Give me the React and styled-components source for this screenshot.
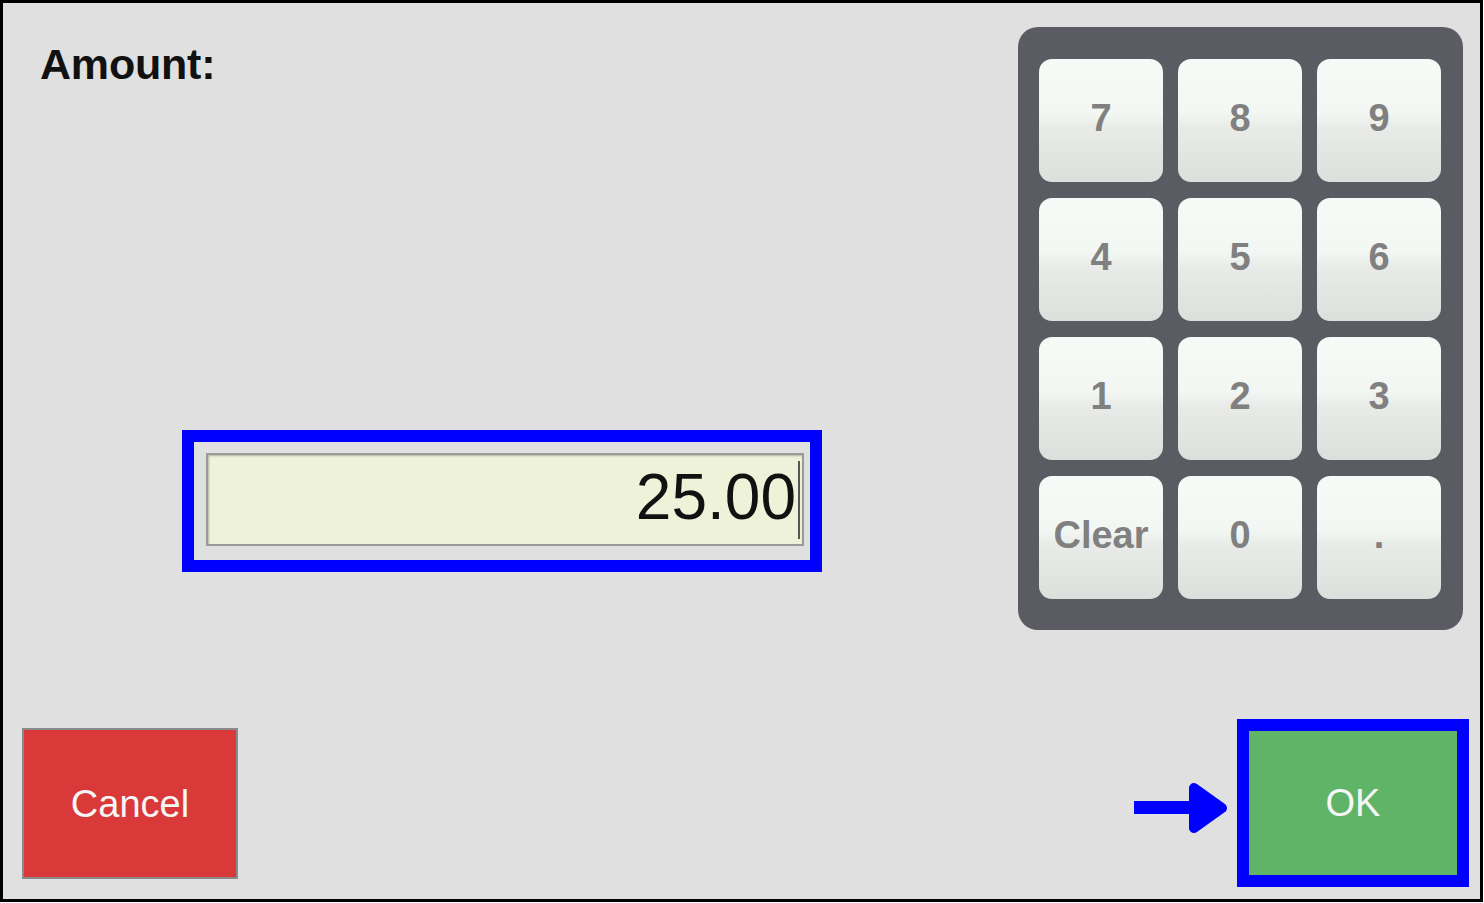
import React from 'react';
import styled, { createGlobalStyle } from 'styled-components';

const GlobalStyle = createGlobalStyle`
  html, body {
    margin: 0;
    padding: 0;
    background: #ffffff;
  }
  * {
    box-sizing: border-box;
  }
`;

const Frame = styled.div`
  width: 1483px;
  height: 902px;
  border: 3px solid #000;
  background: #e0e0e0;
  display: flex;
  flex-direction: column;
  justify-content: space-between;
  font-family: "Liberation Sans", Arial, sans-serif;
`;

const TopRow = styled.div`
  display: flex;
  justify-content: space-between;
  align-items: flex-start;
  padding: 24px 17px 0 0;
`;

const LeftColumn = styled.div`
  display: flex;
  flex-direction: column;
  align-items: flex-start;
  padding-left: 37px;
`;

const Label = styled.div`
  margin-top: 16px;
  font-size: 43px;
  line-height: 1;
  font-weight: bold;
  letter-spacing: -0.2px;
  color: #111;
`;

// blue outline drawn round the highlighted control
const Highlight = styled.div`
  border: 12px solid #0000ff;
  padding: ${p => p.$pad || '0'};
  margin: ${p => p.$margin || '0'};
`;

const AmountField = styled.div`
  width: 598px;
  height: 93px;
  display: flex;
  align-items: center;
  justify-content: flex-end;
  padding: 0 2px 6px 0;
  background: #eef2d9;
  border: 2px solid #9a9a9a;
  box-shadow: inset 1px 1px 2px rgba(0, 0, 0, 0.25);
  font-size: 64px;
  line-height: 1;
  color: #111;
`;

const Caret = styled.span`
  display: inline-block;
  width: 2px;
  height: 78px;
  margin: 6px 0 0 2px;
  background: #555;
`;

const Keypad = styled.div`
  width: 445px;
  height: 603px;
  padding: 32px 22px 31px 21px;
  background: #5b5b63;
  border-radius: 20px;
  display: grid;
  grid-template-columns: repeat(3, 124px);
  grid-template-rows: repeat(4, 123px);
  column-gap: 15px;
  row-gap: 16px;
`;

const Key = styled.button`
  display: flex;
  align-items: center;
  justify-content: center;
  padding: 0 0 5px 0;
  border: none;
  border-radius: 13px;
  background: linear-gradient(
    to bottom,
    #f7faf7 0%,
    #f3f7f3 44%,
    #e8ebe8 56%,
    #dcdfdc 100%
  );
  font-family: "Liberation Sans", Arial, sans-serif;
  font-size: 38px;
  line-height: 1;
  font-weight: bold;
  color: #808080;
  cursor: pointer;
`;

const BottomRow = styled.div`
  display: flex;
  justify-content: space-between;
  align-items: flex-end;
  padding: 0 11px 12px 19px;
`;

const ActionButton = styled.button`
  width: ${p => p.$w}px;
  height: ${p => p.$h}px;
  display: flex;
  align-items: center;
  justify-content: center;
  background: ${p => p.$bg};
  border: ${p => (p.$outlined ? '2px solid #8a8a8a' : 'none')};
  font-family: "Liberation Sans", Arial, sans-serif;
  font-size: 38px;
  line-height: 1;
  color: #f6f6f6;
  cursor: pointer;
  margin-bottom: ${p => p.$mb || 0}px;
`;

const OkGroup = styled.div`
  display: flex;
  align-items: center;
  gap: 9px;
`;

const Arrow = styled.svg`
  display: block;
  margin-top: 10px;
`;

const keys = ['7', '8', '9', '4', '5', '6', '1', '2', '3', 'Clear', '0', '.'];

const App = () => {
  return (
    <>
      <GlobalStyle />
      <Frame>
        <TopRow>
          <LeftColumn>
            <Label>Amount:</Label>
            <Highlight $pad="11px 6px 14px 12px" $margin="344px 0 0 142px">
              <AmountField>
                25.00
                <Caret />
              </AmountField>
            </Highlight>
          </LeftColumn>
          <Keypad>
            {keys.map(k => (
              <Key key={k}>{k}</Key>
            ))}
          </Keypad>
        </TopRow>
        <BottomRow>
          <ActionButton $w={216} $h={151} $bg="#d93939" $outlined $mb={8}>
            Cancel
          </ActionButton>
          <OkGroup>
            <Arrow width="94" height="52" viewBox="0 0 94 52">
              <rect x="0" y="19" width="62" height="13" fill="#0000ff" />
              <polygon
                points="60,6 88,26 60,46"
                fill="#0000ff"
                stroke="#0000ff"
                strokeWidth="10"
                strokeLinejoin="round"
              />
            </Arrow>
            <Highlight>
              <ActionButton $w={208} $h={144} $bg="#60b467">
                OK
              </ActionButton>
            </Highlight>
          </OkGroup>
        </BottomRow>
      </Frame>
    </>
  );
};

export default App;
